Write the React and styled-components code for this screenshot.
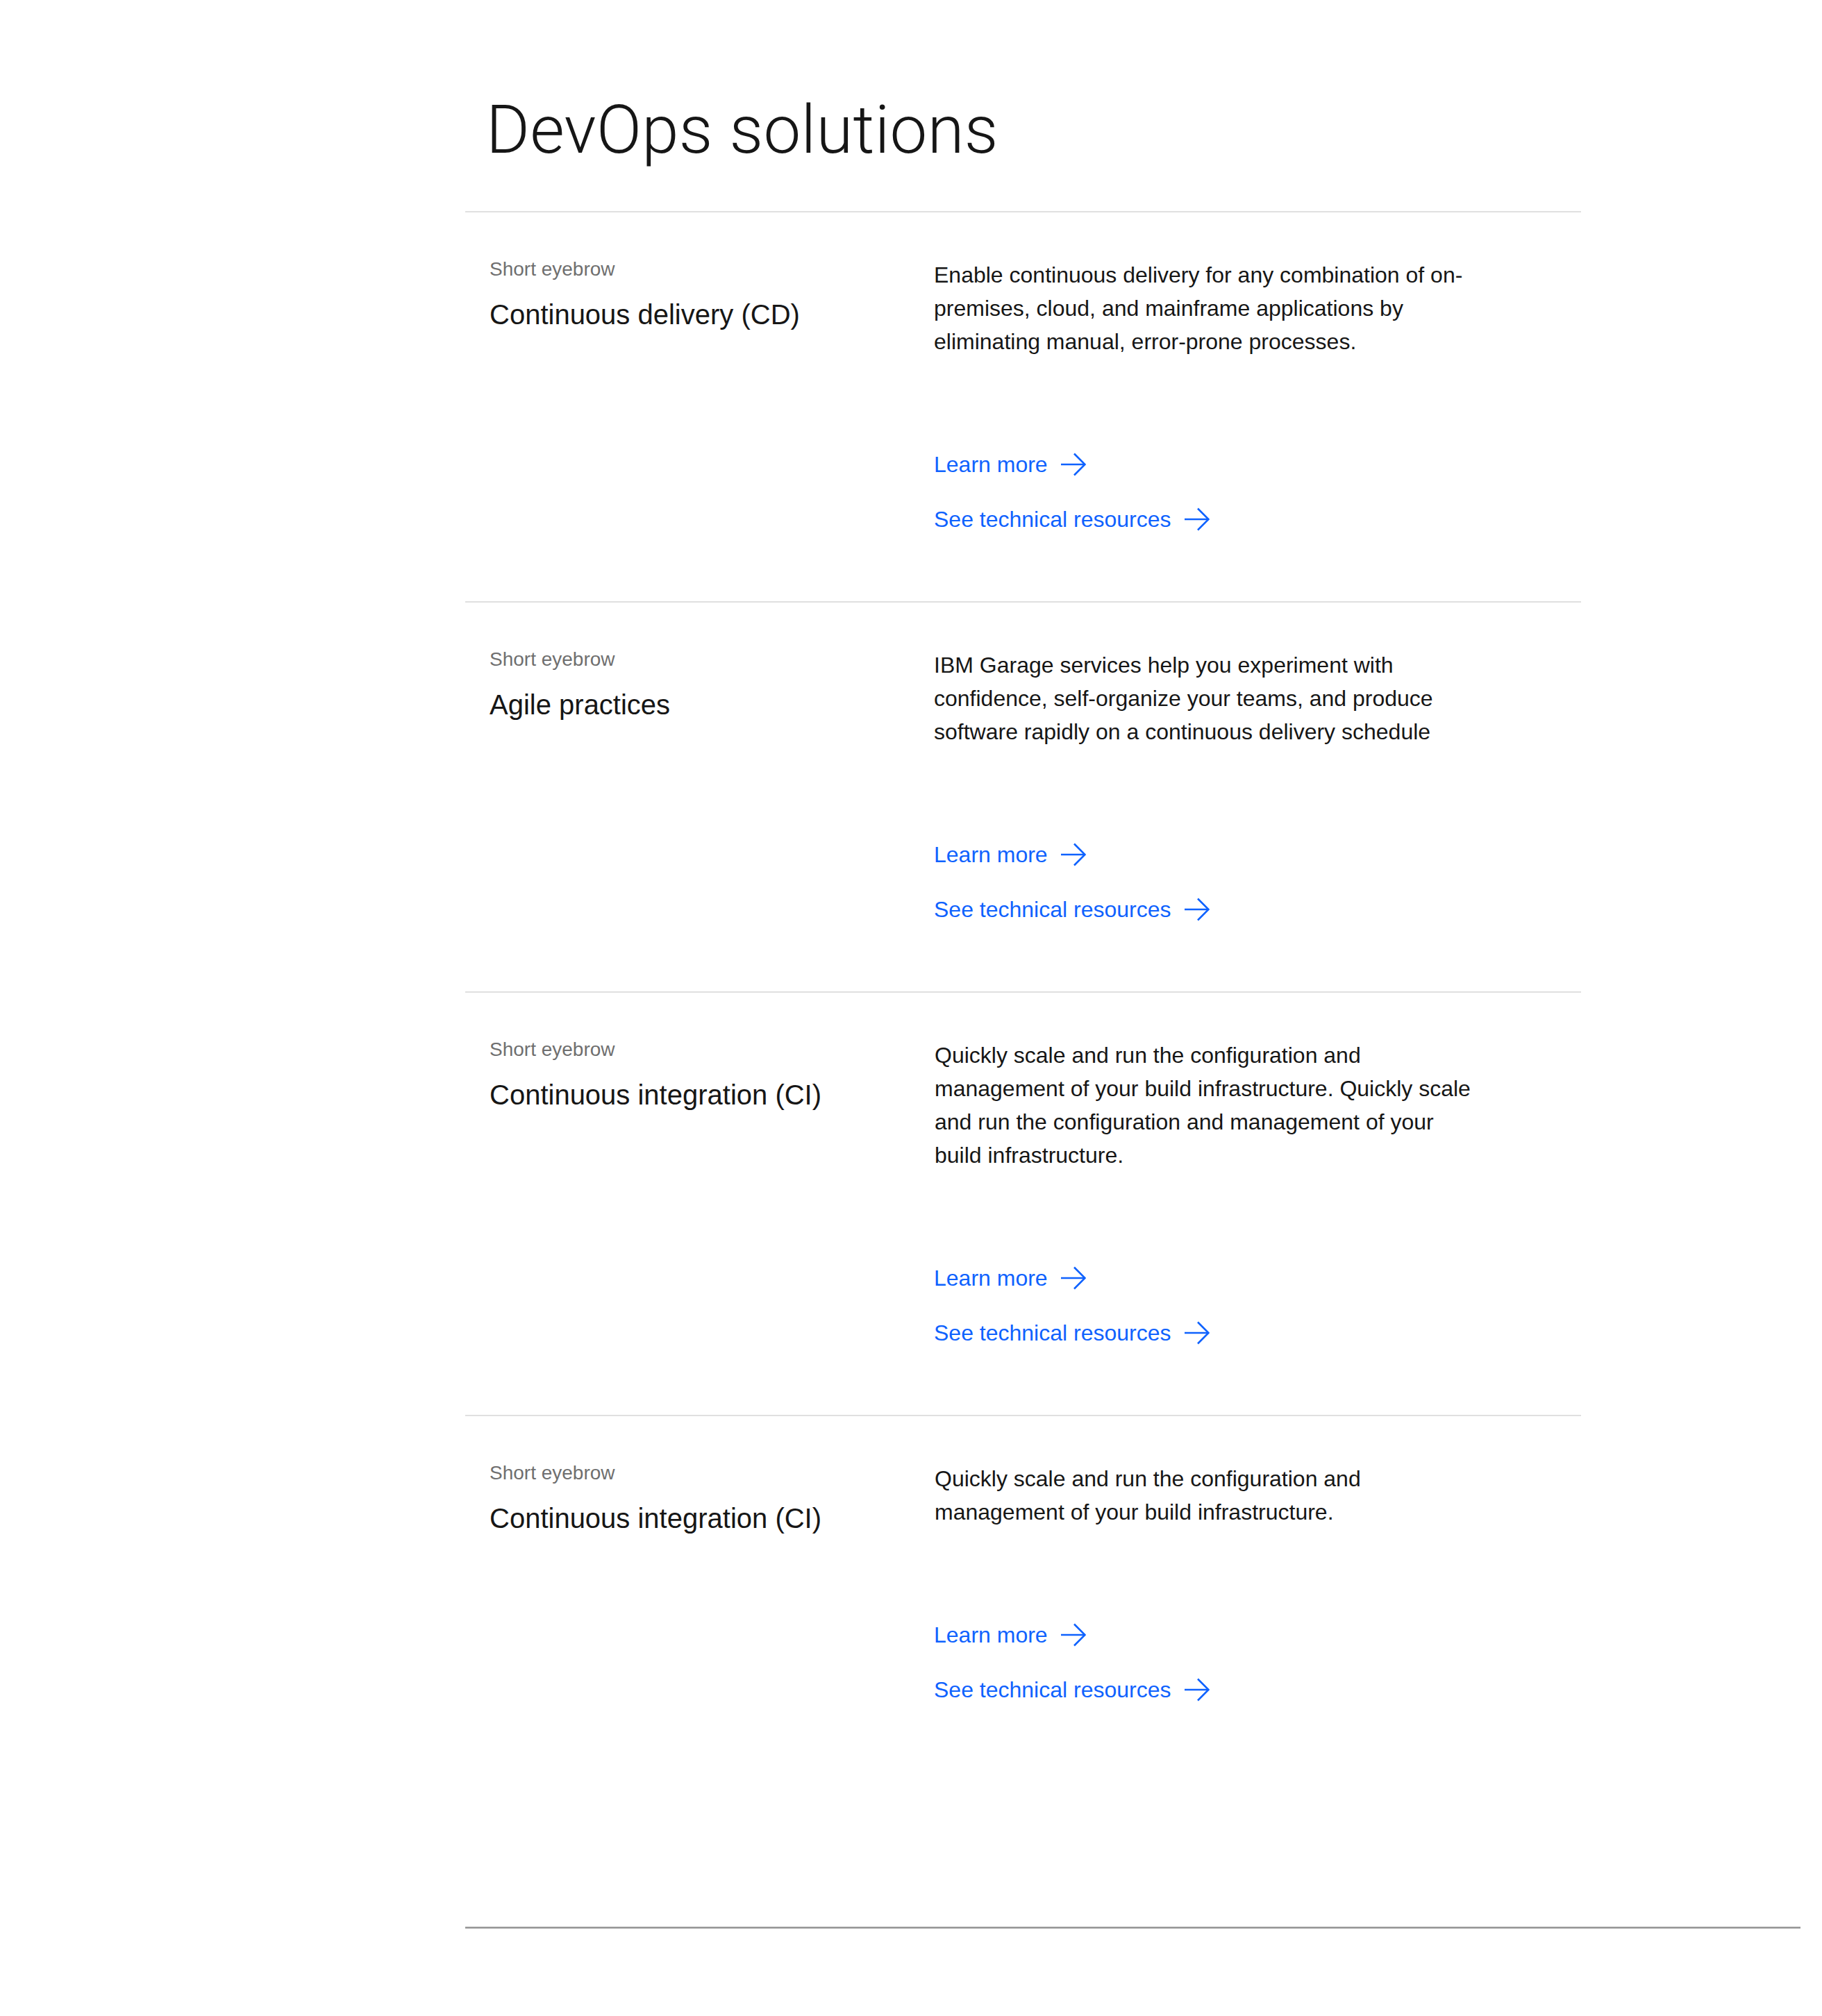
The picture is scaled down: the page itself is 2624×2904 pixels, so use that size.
import React from "react";
import styled, { createGlobalStyle } from "styled-components";

const GlobalStyle = createGlobalStyle`
  html, body {
    margin: 0;
    padding: 0;
    background: #ffffff;
  }
  body {
    font-family: "Liberation Sans", Arial, sans-serif;
    color: #161616;
  }
`;

const Page = styled.main`
  padding: 131px 0 128px 670px;
`;

const Section = styled.section`
  width: 1607px;
`;

const Headline = styled.h2`
  margin: 0 0 60px;
  padding-left: 30px;
  font-family: Roboto, "Liberation Sans", sans-serif;
  font-weight: 300;
  font-size: 96px;
  line-height: 113px;
  letter-spacing: 0.3px;
  color: #161616;
`;

const Row = styled.article`
  display: grid;
  grid-template-columns: 675px 1fr;
  border-top: 2px solid #e0e0e0;
  padding-bottom: 94px;
`;

const Heading = styled.div`
  padding: 64px 0 0 35px;
`;

const Eyebrow = styled.p`
  margin: 0;
  font-size: 28px;
  line-height: 36px;
  color: #6f6f6f;
`;

const Title = styled.h3`
  margin: 19px 0 0;
  font-size: 40px;
  line-height: 56px;
  font-weight: 400;
  color: #161616;
`;

const Body = styled.div`
  padding-top: 66px;
`;

const Description = styled.p`
  margin: 0;
  max-width: 785px;
  padding-left: ${(p) => (p.$nudge ? 1 : 0)}px;
  font-size: 32px;
  line-height: 48px;
  color: #161616;
`;

const LinkList = styled.ul`
  list-style: none;
  margin: 129px 0 0;
  padding: 0;
  display: flex;
  flex-direction: column;
  align-items: flex-start;
  gap: 31px;
`;

const Link = styled.a`
  display: inline-flex;
  align-items: center;
  gap: 19px;
  font-size: 32px;
  line-height: 48px;
  color: #0f62fe;
  text-decoration: none;
  cursor: pointer;
`;

const Divider = styled.hr`
  margin: 223px 0 0;
  width: 1923px;
  border: 0;
  border-top: 1px solid #c6c6c6;
  border-bottom: 2px solid #939393;
  height: 0;
`;

const Arrow = () => (
  <svg width="36" height="34" viewBox="0 0 36 34" fill="none" aria-hidden="true">
    <path d="M0 17H34.5" stroke="#0f62fe" strokeWidth="2.6" />
    <path d="M19 1.5L34.5 17L19 32.5" stroke="#0f62fe" strokeWidth="2.6" />
  </svg>
);

const items = [
  {
    title: "Continuous delivery (CD)",
    text:
      "Enable continuous delivery for any combination of on-premises, cloud, and mainframe applications by eliminating manual, error-prone processes.",
  },
  {
    title: "Agile practices",
    text:
      "IBM Garage services help you experiment with confidence, self-organize your teams, and produce software rapidly on a continuous delivery schedule",
  },
  {
    title: "Continuous integration (CI)",
    text:
      "Quickly scale and run the configuration and management of your build infrastructure. Quickly scale and run the configuration and management of your build infrastructure.",
    nudge: true,
  },
  {
    title: "Continuous integration (CI)",
    text:
      "Quickly scale and run the configuration and management of your build infrastructure.",
    nudge: true,
  },
];

export default function App() {
  return (
    <>
      <GlobalStyle />
      <Page>
        <Section>
          <Headline>DevOps solutions</Headline>
          {items.map((item, i) => (
            <Row key={i}>
              <Heading>
                <Eyebrow>Short eyebrow</Eyebrow>
                <Title>{item.title}</Title>
              </Heading>
              <Body>
                <Description $nudge={item.nudge}>{item.text}</Description>
                <LinkList>
                  <li>
                    <Link href="#">
                      Learn more
                      <Arrow />
                    </Link>
                  </li>
                  <li>
                    <Link href="#">
                      See technical resources
                      <Arrow />
                    </Link>
                  </li>
                </LinkList>
              </Body>
            </Row>
          ))}
        </Section>
        <Divider />
      </Page>
    </>
  );
}
